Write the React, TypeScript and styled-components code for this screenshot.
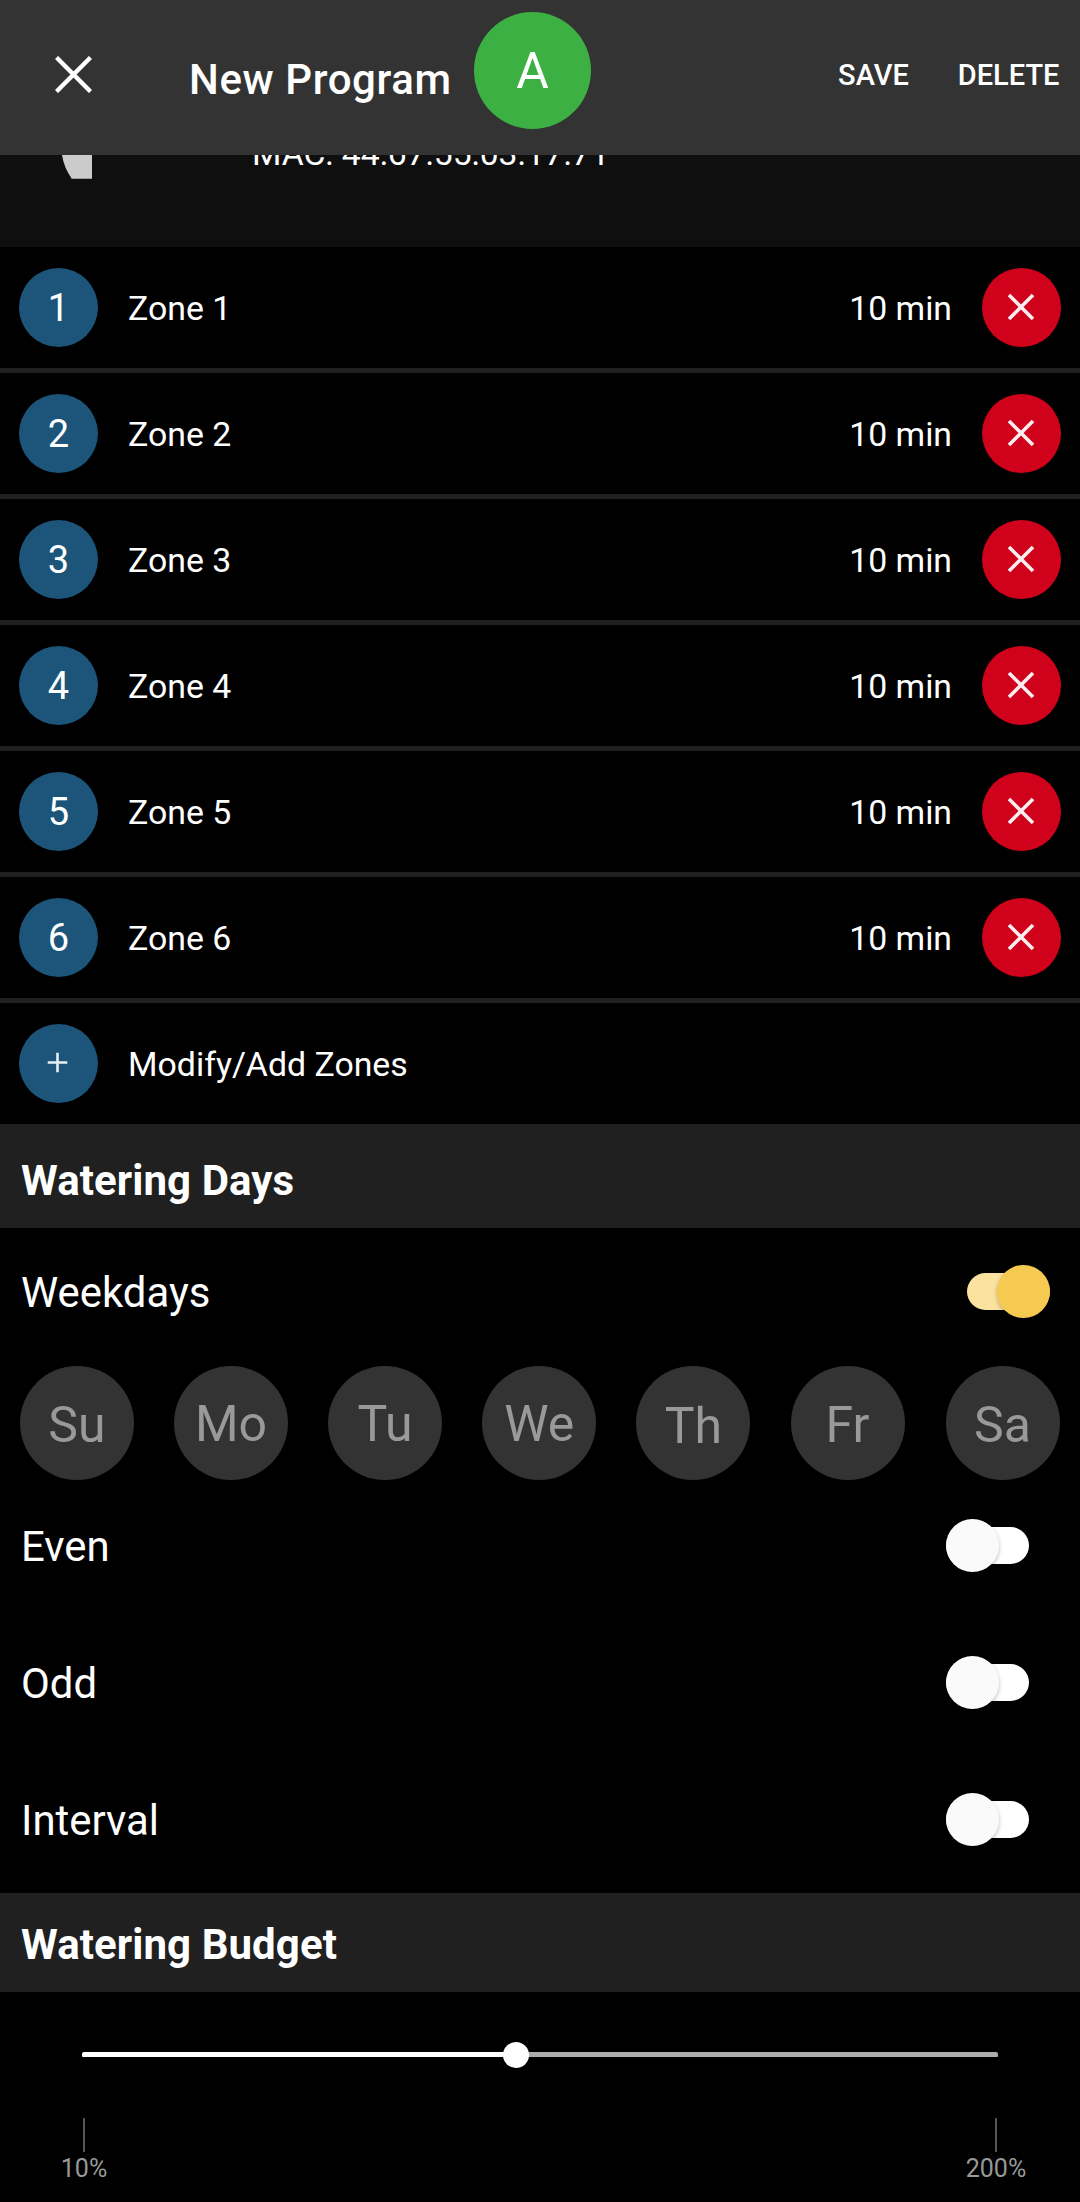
import React, { useState } from "react";
import styled, { createGlobalStyle } from "styled-components";

const GlobalStyle = createGlobalStyle`
  * { box-sizing: border-box; }
  body { margin: 0; background: #000; }
  button { border: 0; padding: 0; margin: 0; background: none; color: inherit; font: inherit; }
`;

const Screen = styled.div`
  display: flex;
  flex-direction: column;
  width: 1080px;
  height: 2202px;
  overflow: hidden;
  background: #000;
  color: #fff;
  font-family: Roboto, "Liberation Sans", sans-serif;
  white-space: nowrap;
`;

const Toolbar = styled.header`
  display: flex;
  align-items: center;
  flex: none;
  height: 155px;
  padding: 0 20.5px 5px 55px;
  background: #333;
`;

const CloseButton = styled.button`
  display: flex;
  width: 37px;
  height: 37px;
  margin-bottom: 1px;
`;

const Title = styled.h1`
  margin: 10px 0 0 97px;
  width: 285px;
  font-size: 42px;
  line-height: 50px;
  font-weight: 500;
  letter-spacing: 0.6px;
`;

const ProgramBadge = styled.div`
  display: flex;
  align-items: center;
  justify-content: center;
  width: 117px;
  height: 117px;
  margin-bottom: 10px;
  padding-top: 1px;
  border-radius: 50%;
  background: #3cb043;
  font-size: 50px;
  line-height: 60px;
`;

const Actions = styled.div`
  display: flex;
  gap: 49px;
  margin-left: auto;
`;

const Action = styled.button`
  font-size: 29px;
  line-height: 36px;
  font-weight: 500;
`;

const DeviceStrip = styled.section`
  display: flex;
  align-items: flex-start;
  flex: none;
  height: 92px;
  padding-left: 62px;
  overflow: hidden;
  background: #0f0f0f;
`;

const DeviceArt = styled.svg`
  width: 30px;
  height: 24px;
  margin-right: 160px;
`;

const MacAddress = styled.span`
  margin-top: -21px;
  font-size: 33.65px;
  line-height: 40px;
`;

const ZoneList = styled.ul`
  display: grid;
  grid-auto-rows: 121px;
  gap: 5px;
  flex: none;
  margin: 0;
  padding: 0;
  list-style: none;
  background: #202020;
`;

const ZoneRow = styled.li`
  display: flex;
  align-items: center;
  padding: 0 19px;
  background: #000;
`;

const Circle = styled.span<{ $color: string }>`
  display: flex;
  align-items: center;
  justify-content: center;
  flex: none;
  width: 79px;
  height: 79px;
  border-radius: 50%;
  background: ${(p) => p.$color};
  font-size: 38px;
  line-height: 44px;
`;

const ZoneName = styled.span`
  margin: 2px auto 0 30px;
  font-size: 33.85px;
  line-height: 40px;
`;

const Duration = styled.span`
  margin: 2px 30px 0 0;
  font-size: 33.75px;
  line-height: 40px;
`;

const SectionTitle = styled.h2<{ $height: number; $drop: number }>`
  display: flex;
  align-items: center;
  flex: none;
  height: ${(p) => p.$height}px;
  margin: 0;
  padding: ${(p) => p.$drop}px 21px 0;
  background: #202020;
  font-size: 42px;
  line-height: 50px;
  font-weight: 700;
  letter-spacing: 0.08px;
`;

const OptionRow = styled.div<{ $height: number }>`
  display: flex;
  align-items: center;
  justify-content: space-between;
  flex: none;
  height: ${(p) => p.$height}px;
  padding: 0 30px 0 21px;
  font-size: 41.9px;
  line-height: 50px;
`;

const OptionLabel = styled.span`
  margin-top: 2px;
`;

const SwitchTrack = styled.button<{ $on: boolean }>`
  display: flex;
  align-items: center;
  justify-content: ${(p) => (p.$on ? "flex-end" : "flex-start")};
  width: 83px;
  height: 37px;
  margin-right: ${(p) => (p.$on ? 0 : 21)}px;
  border-radius: 19px;
  background: ${(p) => (p.$on ? "#fce29f" : "#fff")};
`;

const SwitchThumb = styled.span<{ $on: boolean }>`
  flex: none;
  width: 53px;
  height: 53px;
  border-radius: 50%;
  background: ${(p) => (p.$on ? "#f6ca50" : "#fafafa")};
  box-shadow: 0 2px 4px rgba(0, 0, 0, 0.25);
`;

const DayRow = styled.div`
  display: flex;
  gap: 40.13px;
  flex: none;
  height: 115px;
  margin: 11px 0 0 19.9px;
`;

const Day = styled.button<{ $drop: number }>`
  flex: none;
  width: 114px;
  height: 114px;
  padding-top: ${(p) => p.$drop}px;
  border-radius: 50%;
  background: #333;
  color: #999;
  font-size: 50px;
  line-height: 60px;
  &:last-child {
    margin-left: 0.9px;
  }
`;

const Options = styled.div`
  flex: none;
  padding-bottom: 9px;
`;

const Budget = styled.section`
  display: flex;
  flex-direction: column;
  padding: 50px 0 0;
`;

const Slider = styled.div`
  display: flex;
  align-items: center;
  height: 26px;
  margin: 0 82px;
`;

const SliderLine = styled.span<{ $filled?: boolean }>`
  flex-basis: 0;
  height: 5px;
  margin-bottom: 1px;
  background: ${(p) => (p.$filled ? "#fff" : "#adadad")};
  border-radius: ${(p) => (p.$filled ? "2px 0 0 1px" : "0 2px 1px 0")};
`;

const SliderKnob = styled.span`
  flex: none;
  width: 26px;
  height: 26px;
  margin: 0 -1px;
  border-radius: 50%;
  background: #fff;
  z-index: 1;
`;

const Scale = styled.div`
  display: flex;
  justify-content: space-between;
  margin: 50px 34px 0;
`;

const Mark = styled.div`
  display: flex;
  flex-direction: column;
  align-items: center;
  width: 100px;
  color: #999;
  font-size: 25px;
  line-height: 30px;
  &::before {
    content: "";
    width: 2px;
    height: 34px;
    margin-bottom: 2px;
    background: #565656;
  }
`;

type CrossProps = { size: number; reach: number; stroke: number; color?: string; shift?: number };

const Cross = ({ size, reach, stroke, color = "#fff", shift = 0 }: CrossProps) => {
  const near = size / 2 - reach - shift;
  const far = size / 2 + reach - shift;
  return (
    <svg width={size} height={size} viewBox={`0 0 ${size} ${size}`}>
      <path d={`M${near} ${near}L${far} ${far}M${far} ${near}L${near} ${far}`} stroke={color} strokeWidth={stroke} fill="none" />
    </svg>
  );
};

const Plus = () => (
  <svg width="79" height="79" viewBox="0 0 79 79">
    <path d="M28.7 38.5H48.3M38.5 28.7V48.3" stroke="#e8eef2" strokeWidth="2.6" fill="none" />
  </svg>
);

const zones = [1, 2, 3, 4, 5, 6];
const days = [
  { name: "Su", drop: 4 },
  { name: "Mo", drop: 2 },
  { name: "Tu", drop: 2 },
  { name: "We", drop: 2 },
  { name: "Th", drop: 6 },
  { name: "Fr", drop: 4 },
  { name: "Sa", drop: 4 },
];

function Option({ label, height, initial = false }: { label: string; height: number; initial?: boolean }) {
  const [on, setOn] = useState(initial);
  return (
    <OptionRow $height={height}>
      <OptionLabel>{label}</OptionLabel>
      <SwitchTrack $on={on} role="switch" aria-checked={on} onClick={() => setOn(!on)}>
        <SwitchThumb $on={on} />
      </SwitchTrack>
    </OptionRow>
  );
}

export default function App() {
  const budget = 47.3;
  return (
    <Screen>
      <GlobalStyle />
      <Toolbar>
        <CloseButton>
          <Cross size={37} reach={17} stroke={4.4} />
        </CloseButton>
        <Title>New Program</Title>
        <ProgramBadge>A</ProgramBadge>
        <Actions>
          <Action>SAVE</Action>
          <Action>DELETE</Action>
        </Actions>
      </Toolbar>
      <DeviceStrip>
        <DeviceArt viewBox="0 0 30 24">
          <path d="M0 0H30V23.5L10 24Q2 13 0 0Z" fill="#cbcbcb" />
          <path d="M9.5 23.5H30" stroke="#999" strokeWidth="1" />
        </DeviceArt>
        <MacAddress>MAC: 44:67:55:03:17:71</MacAddress>
      </DeviceStrip>
      <ZoneList>
        {zones.map((n) => (
          <ZoneRow key={n}>
            <Circle $color="#1d547a">{n}</Circle>
            <ZoneName>Zone {n}</ZoneName>
            <Duration>10 min</Duration>
            <Circle $color="#d0021b">
              <Cross size={79} reach={12} stroke={3.6} color="#fdeef0" shift={0.5} />
            </Circle>
          </ZoneRow>
        ))}
        <ZoneRow>
          <Circle $color="#1d547a">
            <Plus />
          </Circle>
          <ZoneName>Modify/Add Zones</ZoneName>
        </ZoneRow>
      </ZoneList>
      <SectionTitle $height={104} $drop={10}>Watering Days</SectionTitle>
      <Option label="Weekdays" height={127} initial />
      <DayRow>
        {days.map((d) => (
          <Day key={d.name} $drop={d.drop}>{d.name}</Day>
        ))}
      </DayRow>
      <Options>
        <Option label="Even" height={129} />
        <Option label="Odd" height={145} />
        <Option label="Interval" height={129} />
      </Options>
      <SectionTitle $height={99} $drop={4}>Watering Budget</SectionTitle>
      <Budget>
        <Slider>
          <SliderLine $filled style={{ flexGrow: budget }} />
          <SliderKnob />
          <SliderLine style={{ flexGrow: 100 - budget }} />
        </Slider>
        <Scale>
          <Mark>10%</Mark>
          <Mark>200%</Mark>
        </Scale>
      </Budget>
    </Screen>
  );
}
